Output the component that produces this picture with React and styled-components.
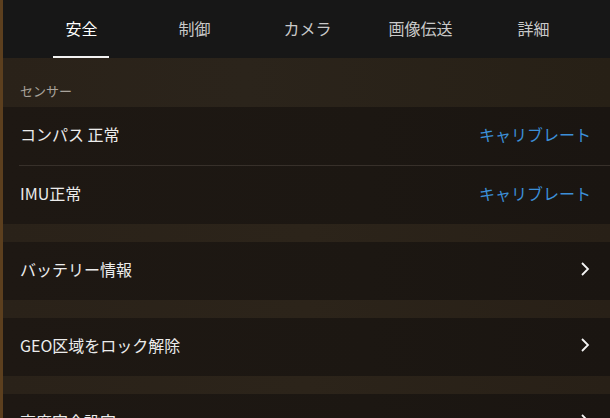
import React from "react"
import styled, { createGlobalStyle } from "styled-components"

const GlobalStyle = createGlobalStyle`
  html, body {
    margin: 0;
    padding: 0;
    background: #1c1712;
    font-family: "Noto Sans CJK JP", "Noto Sans", sans-serif;
  }
`

const Screen = styled.div`
  width: 610px;
  height: 418px;
  overflow: hidden;
  box-sizing: border-box;
  border-left: 3px solid #5c3f1e;
  background: #1c1712;
`

const TabBar = styled.nav`
  display: grid;
  grid-template-columns: repeat(5, 113px);
  padding-left: 22px;
  height: 58px;
  background: #171717;
`

const Tab = styled.div`
  position: relative;
  display: flex;
  align-items: center;
  justify-content: center;
  padding-bottom: 3px;
  font-size: 16px;
  line-height: 1;
  color: ${p => (p.$active ? "#ffffff" : "#c9c9c9")};

  &::after {
    content: "";
    display: ${p => (p.$active ? "block" : "none")};
    position: absolute;
    left: 28px;
    right: 29px;
    bottom: 0;
    height: 2px;
    background: #f2f2f2;
  }
`

const SectionHead = styled.div`
  height: 49px;
  box-sizing: border-box;
  padding: 26px 0 0 17px;
  font-size: 13px;
  line-height: 1;
  color: #a9a39b;
  background: linear-gradient(90deg, #2a2219 0%, #2b241b 40%, #272016 100%);
`

const Row = styled.div`
  position: relative;
  display: flex;
  align-items: center;
  justify-content: space-between;
  height: ${p => (p.$divided ? "59px" : "58px")};
  box-sizing: border-box;
  padding: 0 19px 5px 17px;
  font-size: 16px;
  line-height: 1;
  color: #ececec;
  background: linear-gradient(90deg, #1e1813 0%, #1c1712 60%, #1a1511 100%);

  &::after {
    content: "";
    display: ${p => (p.$divided ? "block" : "none")};
    position: absolute;
    left: 16px;
    right: 0;
    bottom: 0;
    height: 1px;
    background: #37302a;
  }
`

const Gap = styled.div`
  height: 18px;
  background: linear-gradient(90deg, #2a2219 0%, #2c241a 50%, #282017 100%);
`

const Action = styled.span`
  color: #3c8fd8;
  font-size: 16px;
`

const Chevron = () => (
  <svg width="12" height="16" viewBox="0 0 12 16">
    <polyline points="3,2 9,8 3,14" fill="none" stroke="#f4f4f4" strokeWidth="1.8" />
  </svg>
)

const tabs = ["安全", "制御", "カメラ", "画像伝送", "詳細"]

export default function App() {
  return (
    <Screen>
      <GlobalStyle />
      <TabBar>
        {tabs.map((t, i) => (
          <Tab key={t} $active={i === 0}>
            {t}
          </Tab>
        ))}
      </TabBar>
      <SectionHead>センサー</SectionHead>
      <Row $divided>
        <span>コンパス 正常</span>
        <Action>キャリブレート</Action>
      </Row>
      <Row>
        <span>IMU正常</span>
        <Action>キャリブレート</Action>
      </Row>
      <Gap />
      <Row>
        <span>バッテリー情報</span>
        <Chevron />
      </Row>
      <Gap />
      <Row>
        <span>GEO区域をロック解除</span>
        <Chevron />
      </Row>
      <Gap />
      <Row>
        <span>高度安全設定</span>
        <Chevron />
      </Row>
    </Screen>
  )
}
